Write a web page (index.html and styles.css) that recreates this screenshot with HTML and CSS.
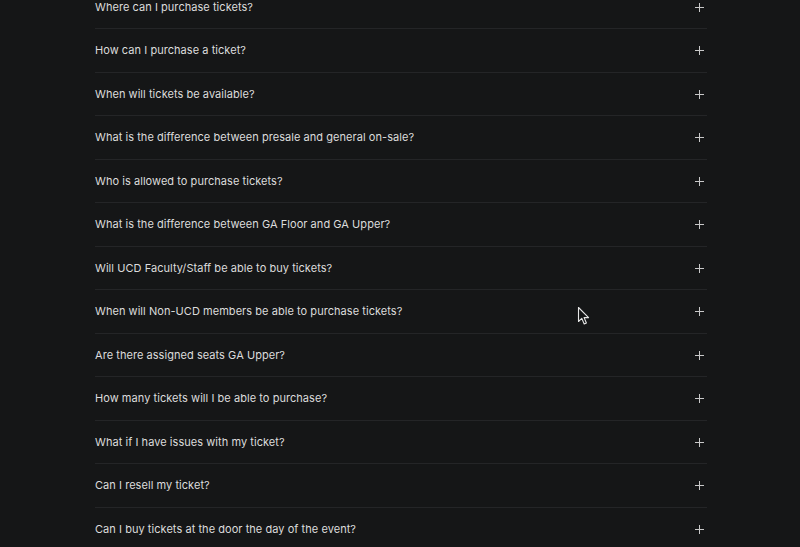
FILE: index.html
```html
<!DOCTYPE html>
<html>
<head>
<meta charset="utf-8">
<link rel="stylesheet" href="styles.css">
</head>
<body>
<div class="faq">
  <div class="row"><span class="q">Where can I purchase tickets?</span><span class="plus"></span></div>
  <div class="row"><span class="q">How can I purchase a ticket?</span><span class="plus"></span></div>
  <div class="row"><span class="q">When will tickets be available?</span><span class="plus"></span></div>
  <div class="row"><span class="q">What is the difference between presale and general on-sale?</span><span class="plus"></span></div>
  <div class="row"><span class="q">Who is allowed to purchase tickets?</span><span class="plus"></span></div>
  <div class="row"><span class="q">What is the difference between GA Floor and GA Upper?</span><span class="plus"></span></div>
  <div class="row"><span class="q">Will UCD Faculty/Staff be able to buy tickets?</span><span class="plus"></span></div>
  <div class="row"><span class="q">When will Non-UCD members be able to purchase tickets?</span><span class="plus"></span></div>
  <div class="row"><span class="q">Are there assigned seats GA Upper?</span><span class="plus"></span></div>
  <div class="row"><span class="q">How many tickets will I be able to purchase?</span><span class="plus"></span></div>
  <div class="row"><span class="q">What if I have issues with my ticket?</span><span class="plus"></span></div>
  <div class="row"><span class="q">Can I resell my ticket?</span><span class="plus"></span></div>
  <div class="row"><span class="q">Can I buy tickets at the door the day of the event?</span><span class="plus"></span></div>
</div>
<svg class="cursor" width="14" height="20" viewBox="0 0 14 20">
  <path d="M1.5 1.5 L1.5 15.5 L4.8 12.4 L7.2 18 L9.4 17 L7.1 11.6 L11.6 11.6 Z" fill="#141516" stroke="#e6e6e6" stroke-width="1.1" stroke-linejoin="round"/>
</svg>
</body>
</html>
```
FILE: styles.css
```css
html, body {
  margin: 0;
  padding: 0;
  background: #151617;
  overflow: hidden;
  height: 547px;
}
body {
  position: relative;
  font-family: Inter, "Noto Sans", sans-serif;
}
.faq {
  width: 612px;
  margin: -14.25px 0 0 95px;
}
.row {
  height: 42.5px;
  border-bottom: 1px solid #242527;
  display: flex;
  align-items: center;
  justify-content: space-between;
}
.q {
  color: #dcdcdc;
  font-size: 11px;
  letter-spacing: 0.05px;
  line-height: 1;
}
.plus {
  position: relative;
  width: 9px;
  height: 9px;
  margin-right: 3px;
}
.plus::before, .plus::after {
  content: "";
  position: absolute;
  background: #c9c9c9;
}
.plus::before {
  left: 0;
  top: 4px;
  width: 9px;
  height: 1.3px;
}
.plus::after {
  top: 0;
  left: 4px;
  width: 1.3px;
  height: 9px;
}
.cursor {
  position: absolute;
  left: 577px;
  top: 306px;
}
```
